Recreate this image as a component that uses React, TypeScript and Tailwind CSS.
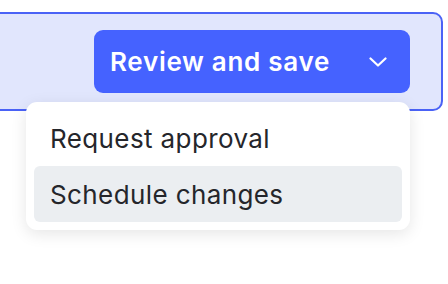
import React from "react";

export default function App() {
  return (
    <div className="w-[448px] h-[284px] bg-white overflow-hidden relative" style={{ fontFamily: "Inter, 'Noto Sans', sans-serif" }}>
      <div className="pt-[12px] pr-[5px] -ml-[10px]">
        <div className="flex justify-end border-2 border-[#4a62f6] bg-[#e1e6fd] rounded-[10px] pt-4 pb-4 pr-[31px]">
          <div className="relative">
            <button className="flex items-center h-[63px] w-[316px] bg-[#4562ff] rounded-[9px] pl-4 pr-[23px] text-white">
              <span className="text-[26px] font-semibold tracking-[0.027em] leading-none">Review and save</span>
              <svg className="ml-auto" width="18" height="10" viewBox="0 0 18 10" fill="none" stroke="white" strokeWidth="2.2" strokeLinecap="round" strokeLinejoin="round">
                <path d="M1.5 1.5L9 8.5L16.5 1.5" />
              </svg>
            </button>
            <div className="absolute right-0 top-[72px] w-[384px] bg-white rounded-[11px] p-2 shadow-[0_4px_16px_rgba(0,0,0,0.1)] z-10">
              <div className="h-[56px] flex items-center px-4 rounded-[6px] text-[26px] text-[#25262b] tracking-[0.015em]">Request approval</div>
              <div className="h-[56px] flex items-center px-4 rounded-[6px] bg-[#ebeef1] text-[26px] text-[#25262b] tracking-[0.015em]">Schedule changes</div>
            </div>
          </div>
        </div>
      </div>
    </div>
  );
}
